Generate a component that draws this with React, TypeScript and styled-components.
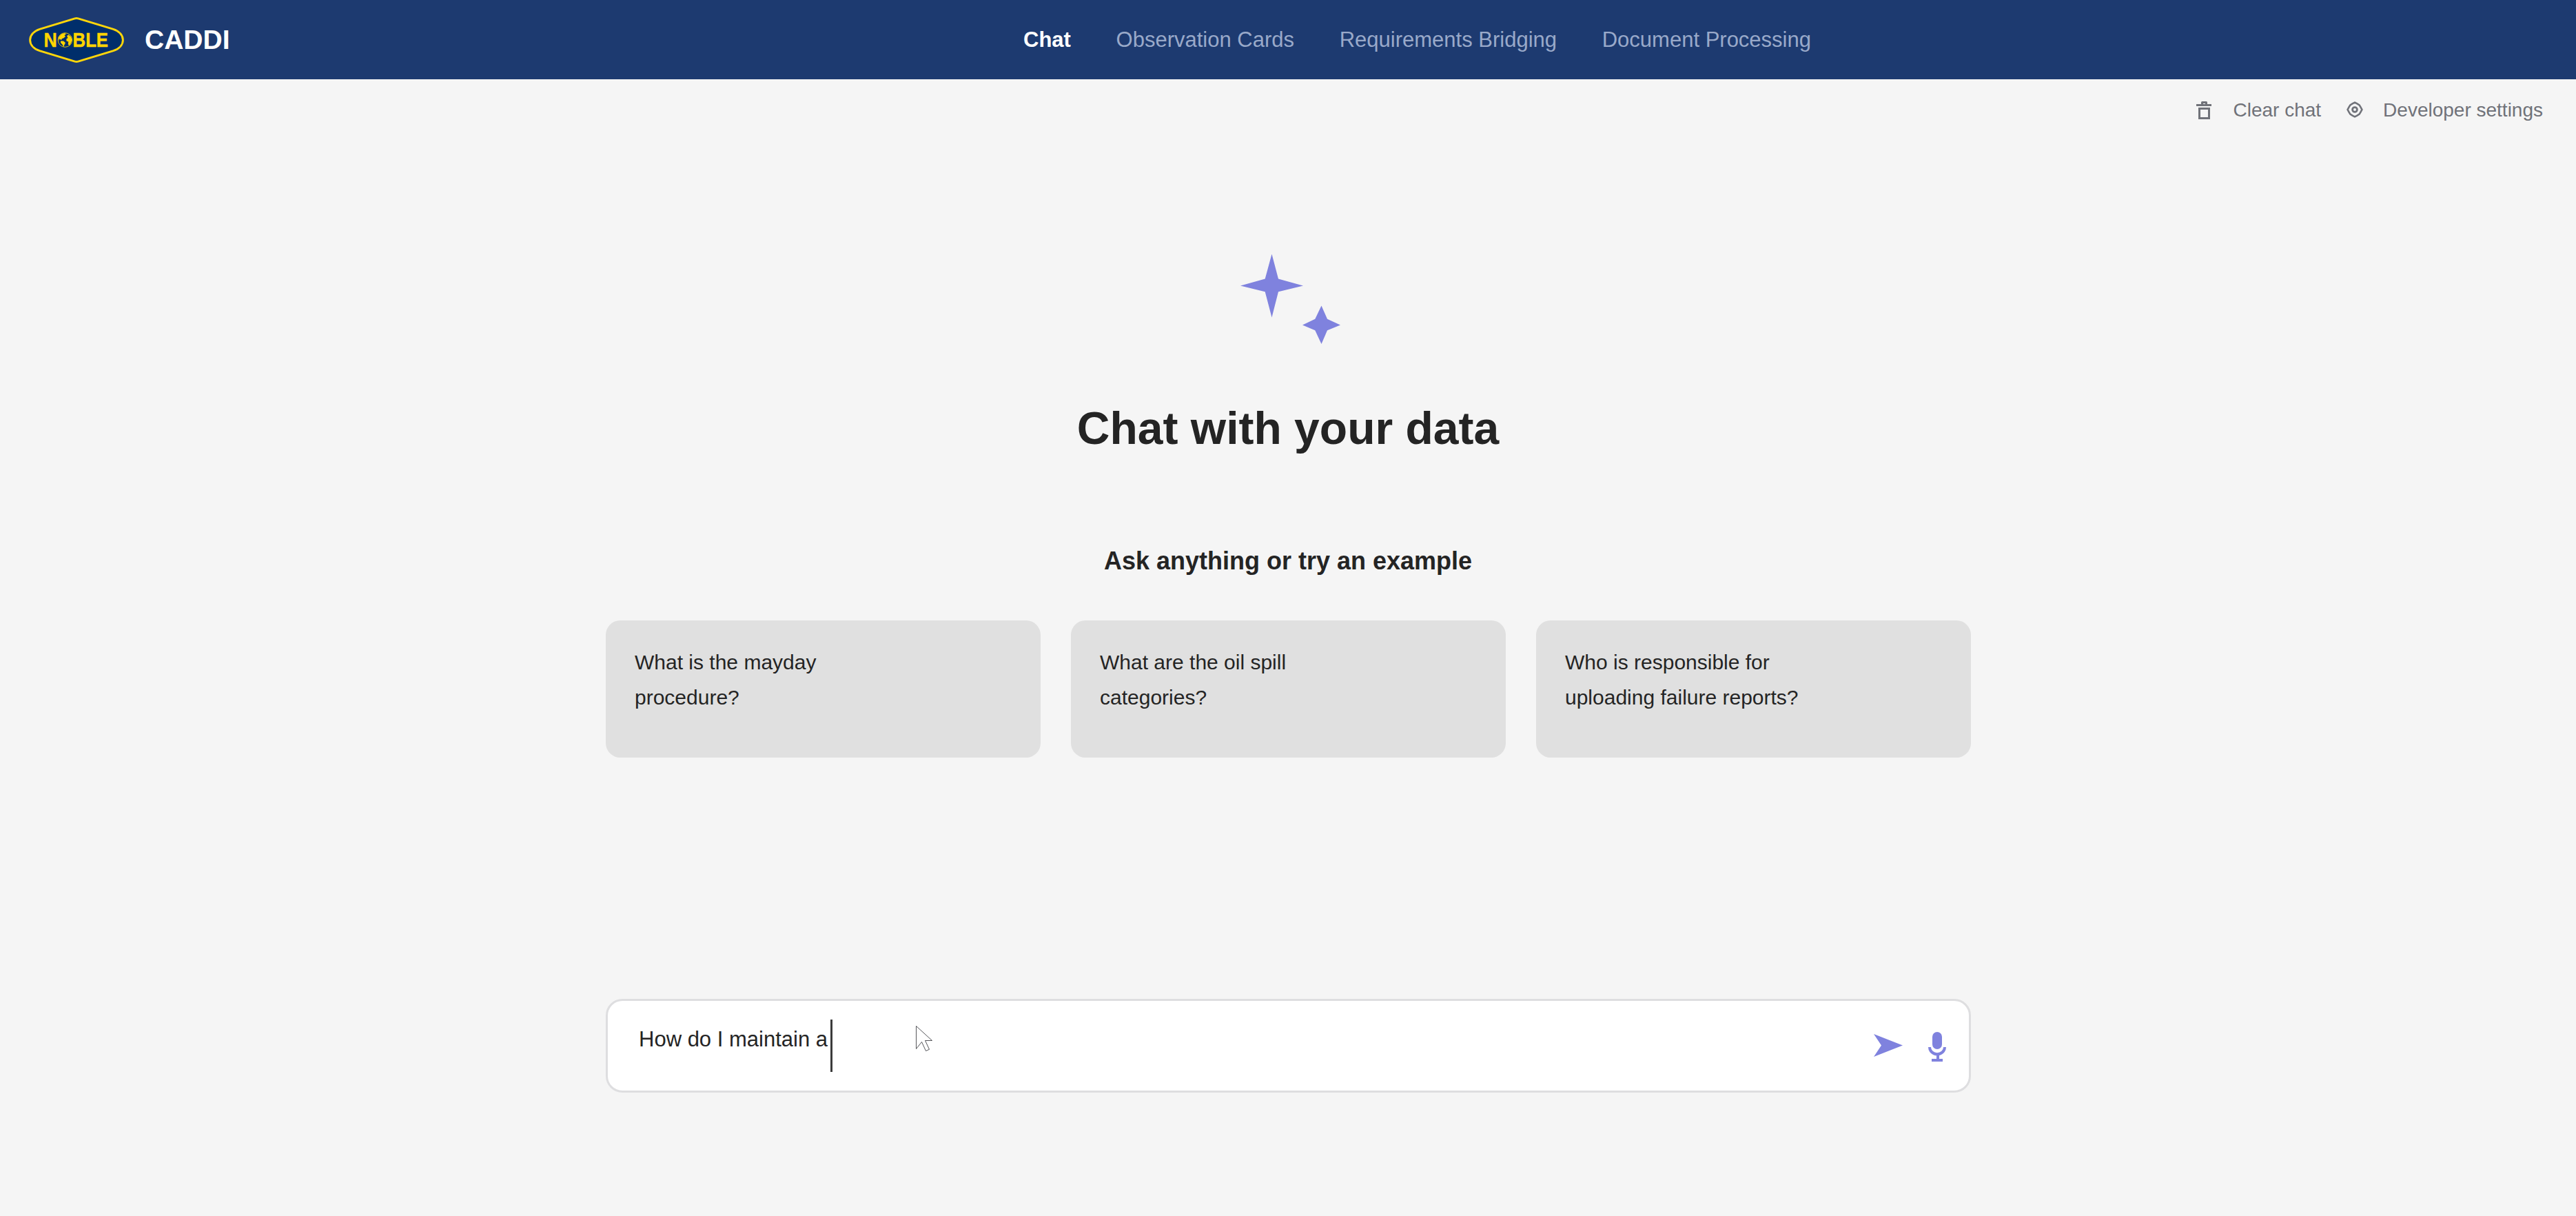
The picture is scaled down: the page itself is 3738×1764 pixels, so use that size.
import React from "react";
import styled, { createGlobalStyle } from "styled-components";

const GlobalStyle = createGlobalStyle`
  * { box-sizing: border-box; }
  body { margin: 0; background: #f5f5f5; }
`;

const Page = styled.div`
  width: 3738px;
  height: 1764px;
  overflow: hidden;
  background: #f5f5f5;
  color: #242424;
  font-family: "Liberation Sans", Arial, sans-serif;
`;

const Header = styled.header`
  display: flex;
  align-items: center;
  height: 115px;
  background: #1d3a70;
`;

const Brand = styled.div`
  display: flex;
  align-items: center;
  flex: 0 0 1485px;
  padding-left: 42px;
  gap: 30px;
`;

const BrandName = styled.span`
  font-size: 39px;
  line-height: 45px;
  font-weight: 700;
  color: #fff;
`;

const Nav = styled.nav`
  display: flex;
  gap: 65.7px;
`;

const NavItem = styled.a<{ $active?: boolean }>`
  font-size: 31px;
  line-height: 35px;
  white-space: nowrap;
  font-weight: ${(p) => (p.$active ? 700 : 400)};
  color: ${(p) => (p.$active ? "#ffffff" : "#99a9c9")};
`;

const Toolbar = styled.div`
  display: flex;
  justify-content: flex-end;
  align-items: flex-start;
  height: 90px;
  padding: 29px 48px 0 0;
  gap: 37px;
`;

const ToolButton = styled.div<{ $gap: number }>`
  display: flex;
  gap: ${(p) => p.$gap}px;
  font-size: 28px;
  line-height: 31px;
  white-space: nowrap;
  color: #707279;
  svg { margin-top: 3px; }
`;

const Main = styled.main`
  display: flex;
  flex-direction: column;
  align-items: center;
  padding-top: 164px;
`;

const Title = styled.h1`
  margin: 85px 0 0;
  font-size: 66px;
  line-height: 74px;
  font-weight: 700;
`;

const Subtitle = styled.h2`
  margin: 135px 0 0;
  font-size: 36px;
  line-height: 41px;
  font-weight: 700;
`;

const Examples = styled.div`
  display: grid;
  grid-template-columns: repeat(3, 631px);
  gap: 44px;
  width: 1981px;
  margin: 66px 0 0 1px;
`;

const Card = styled.div`
  height: 199px;
  padding: 35px 42px;
  border-radius: 21px;
  background: #e0e0e0;
`;

const CardText = styled.p`
  margin: 0;
  max-width: 350px;
  font-size: 30px;
  line-height: 51px;
`;

const Composer = styled.div`
  position: relative;
  display: flex;
  align-items: flex-start;
  width: 1981px;
  height: 136px;
  margin: 350px 0 0 1px;
  padding: 27px 33px 0 45px;
  border: 3px solid #dedee0;
  border-radius: 24px;
  background: #fff;
`;

const Draft = styled.span`
  margin-top: 11px;
  font-size: 31px;
  line-height: 35px;
  white-space: nowrap;
`;

const Caret = styled.span`
  width: 3px;
  height: 76px;
  margin-left: 4px;
  background: #3b3b3b;
`;

const Actions = styled.div`
  display: flex;
  gap: 37px;
  margin: 18px 0 0 auto;
`;

const Pointer = styled.svg`
  position: absolute;
  left: 446px;
  top: 35px;
`;

const Logo = () => (
  <svg width="138" height="66" viewBox="42 24 138 66">
    <path
      d="M108.5 25.8 Q111 25.1 113.5 25.8 L164.5 41.3 C183 47.5 183 66.5 164.5 72.7 L113.5 88.2 Q111 88.9 108.5 88.2 L57.5 72.7 C39 66.5 39 47.5 57.5 41.3 Z"
      fill="#002e6b"
      stroke="#ffd60a"
      strokeWidth="2.9"
    />
    <g
      fill="#ffd500"
      stroke="#ffd500"
      strokeWidth="0.5"
      fontFamily="Liberation Sans, Arial, sans-serif"
      fontWeight="700"
      fontSize="28.6"
    >
      <text x="63.5" y="67" textLength="19.3" lengthAdjust="spacingAndGlyphs">N</text>
      <text x="105.6" y="67" textLength="51.4" lengthAdjust="spacingAndGlyphs">BLE</text>
    </g>
    <circle cx="94.4" cy="57" r="10.3" fill="#002e6b" stroke="#ffd500" strokeWidth="0.9" />
    <path
      fill="#ffd500"
      d="M85 53 L89 48.5 L94 47 L96 48.5 L93.5 50 L95 52 L92 54.5 L90 55 L89 57 L86.5 55.5 L85.5 58 Z M88 58.5 L92 58.5 L95 61 L93.5 64 L92 67 L90.5 63.5 L88 61 Z M97 51 L99.5 49.5 L103 52.5 L104.5 57 L103 61 L101 65 L98.8 63.5 L99.3 59.5 L96.5 58.5 L96.3 55.5 L98.5 54 Z"
    />
  </svg>
);

const TrashIcon = () => (
  <svg width="22" height="26" viewBox="0 0 22 26" fill="currentColor">
    <path d="M0 4h7V1.500Q7 0 8.500 0h6Q16 0 16 1.500V4h6v3H0zM10 3v1h3V3z" fillRule="evenodd" />
    <path d="M3 9h17v17H3zM6 12v11h11V12z" fillRule="evenodd" />
  </svg>
);

const GearIcon = () => (
  <svg width="24" height="24" viewBox="-12 -12 24 24" fill="none" stroke="currentColor">
    <path
      d="M0 -10.4 L3.4 -8.6 L6.6 -6.6 L8.6 -3.4 L10.4 0 L8.6 3.4 L6.6 6.6 L3.4 8.6 L0 10.4 L-3.4 8.6 L-6.6 6.6 L-8.6 3.4 L-10.4 0 L-8.6 -3.4 L-6.6 -6.6 L-3.4 -8.6 Z"
      strokeWidth="2.6"
    />
    <circle r="3.4" strokeWidth="2.8" />
  </svg>
);

const Sparkles = () => (
  <svg width="152" height="130" viewBox="1793 369 152 130" fill="#7f82de">
    <path d="M1845.5 368.5 L1855 404.5 L1891 414.5 L1855 423.3 L1845.5 460.5 L1835.7 423.3 L1800 414.5 L1835.7 404.5 Z" />
    <path d="M1917.5 443.5 L1926 462.7 L1945 471.5 L1926 479.3 L1917.500 499 L1908.3 479.3 L1890 471.5 L1908.3 462.7 Z" />
  </svg>
);

const SendIcon = () => (
  <svg width="42" height="43" viewBox="0 -3 42 43" fill="#7f82de">
    <path d="M0 0 L42 16.5 L0 33 L11 16.5 Z" />
  </svg>
);

const MicIcon = () => (
  <svg width="26" height="43" viewBox="0 0 26 43" fill="#7f82de">
    <rect x="6" y="0" width="14" height="25" rx="7" />
    <path d="M0 22h4a9 8.3 0 0 0 18 0h4a13 12.3 0 0 1-26 0z" />
    <path d="M12 33h4v6h5v4H5v-4h7z" />
  </svg>
);

const navItems = ["Chat", "Observation Cards", "Requirements Bridging", "Document Processing"];

const examples = [
  "What is the mayday procedure?",
  "What are the oil spill categories?",
  "Who is responsible for uploading failure reports?",
];

export default function App() {
  return (
    <Page>
      <GlobalStyle />
      <Header>
        <Brand>
          <Logo />
          <BrandName>CADDI</BrandName>
        </Brand>
        <Nav>
          {navItems.map((label, i) => (
            <NavItem key={label} $active={i === 0}>{label}</NavItem>
          ))}
        </Nav>
      </Header>
      <Toolbar>
        <ToolButton $gap={31}>
          <TrashIcon />
          Clear chat
        </ToolButton>
        <ToolButton $gap={29}>
          <GearIcon />
          Developer settings
        </ToolButton>
      </Toolbar>
      <Main>
        <Sparkles />
        <Title>Chat with your data</Title>
        <Subtitle>Ask anything or try an example</Subtitle>
        <Examples>
          {examples.map((text) => (
            <Card key={text}>
              <CardText>{text}</CardText>
            </Card>
          ))}
        </Examples>
        <Composer>
          <Draft>How do I maintain a</Draft>
          <Caret />
          <Actions>
            <SendIcon />
            <MicIcon />
          </Actions>
          <Pointer width="28" height="40" viewBox="0 0 28 40" fill="#fff" stroke="#55565a" strokeWidth="1">
            <path d="M1.5 1.5 L24.5 22.5 H14.5 L20.5 35.3 L15.5 37.5 L9.5 24.5 L1.5 34.5 Z" />
          </Pointer>
        </Composer>
      </Main>
    </Page>
  );
}
